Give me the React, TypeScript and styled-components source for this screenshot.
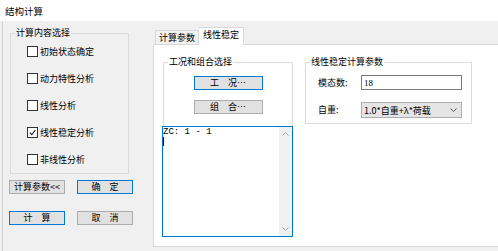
import React from 'react';
import styled, { createGlobalStyle } from 'styled-components';

const GlobalStyle = createGlobalStyle`
  html, body {
    margin: 0;
    padding: 0;
    background: #f0f0f0;
  }
`;

const font = `"Noto Sans CJK SC", "Microsoft YaHei", sans-serif`;

const Window = styled.div`
  width: 498px;
  height: 251px;
  display: flex;
  flex-direction: column;
  background: #f0f0f0;
  font-family: ${font};
  font-size: 9px;
  color: #000;
  overflow: hidden;
`;

const TitleBar = styled.div`
  height: 21px;
  flex: none;
  display: flex;
  align-items: center;
  padding-left: 5px;
  background: #fff;
  font-size: 9.5px;
`;

const Body = styled.div`
  flex: 1;
  display: flex;
  margin-left: 2px;
  border-left: 1px solid #d4d4d4;
  min-height: 0;
`;

const LeftPane = styled.div`
  width: 150px;
  flex: none;
  padding-top: 6px;
  box-sizing: border-box;
`;

const GroupWrap = styled.div`
  padding-left: 7px;
`;

const GroupBox = styled.fieldset<{ $width: number; $open?: boolean }>`
  margin: 0;
  min-width: 0;
  width: ${(p) => p.$width}px;
  box-sizing: border-box;
  border: 1px solid #dcdcdc;
  ${(p) => (p.$open ? 'border-bottom: none;' : '')}
  padding: 0;
`;

const GroupTitle = styled.legend`
  margin-left: 4px;
  padding: 0 1px;
  line-height: 12px;
  font-size: 9px;
`;

const ContentList = styled.div`
  display: flex;
  flex-direction: column;
  gap: 13px;
  padding: 5px 0 7px 16px;
`;

const CheckRow = styled.label`
  display: flex;
  align-items: center;
  gap: 2px;
  height: 14px;
`;

const CheckBox = styled.span`
  width: 9px;
  height: 9px;
  border: 1px solid #333;
  background: #fff;
  display: flex;
  align-items: center;
  justify-content: center;
`;

const ButtonGrid = styled.div`
  display: grid;
  grid-template-columns: 56px 56px;
  column-gap: 12px;
  row-gap: 17px;
  margin: 6px 0 0 6px;
`;

const Button = styled.button<{ $focused?: boolean; $width?: number }>`
  width: ${(p) => (p.$width ? `${p.$width}px` : '100%')};
  height: 14px;
  padding: 0;
  border: 1px solid ${(p) => (p.$focused ? '#0078d7' : '#adadad')};
  background: #e1e1e1;
  font-family: ${font};
  font-size: 9px;
  line-height: 12px;
  color: #000;
  white-space: pre;
  display: flex;
  align-items: center;
  justify-content: center;
`;

const TabControl = styled.div`
  flex: 1;
  display: flex;
  flex-direction: column;
  min-width: 0;
`;

const TabStrip = styled.div`
  height: 23px;
  flex: none;
  display: flex;
  align-items: flex-end;
  padding-left: 2px;
  box-sizing: border-box;
`;

const Tab = styled.div<{ $active?: boolean }>`
  height: ${(p) => (p.$active ? 18 : 14)}px;
  padding: 0 ${(p) => (p.$active ? 4 : 3)}px;
  box-sizing: border-box;
  border: 1px solid #d9d9d9;
  border-bottom: none;
  ${(p) => (p.$active ? 'border-left: none;' : '')}
  background: ${(p) => (p.$active ? '#fff' : '#f0f0f0')};
  margin-bottom: ${(p) => (p.$active ? -1 : 0)}px;
  position: relative;
  z-index: ${(p) => (p.$active ? 1 : 0)};
  display: flex;
  align-items: ${(p) => (p.$active ? 'flex-start' : 'center')};
  padding-top: ${(p) => (p.$active ? 1 : 0)}px;
  line-height: 12px;
`;

const TabPanel = styled.div`
  flex: 1;
  margin-bottom: 4px;
  margin-right: -1px;
  background: #fff;
  border: 1px solid #d9d9d9;
  display: flex;
  align-items: flex-start;
  gap: 12px;
  padding: 11px 0 0 9px;
`;

const CaseColumn = styled.div`
  display: flex;
  flex-direction: column;
  align-items: center;
  padding-top: 8px;
`;

const CaseButtons = styled.div`
  display: flex;
  flex-direction: column;
  gap: 10px;
`;

const Memo = styled.div`
  align-self: stretch;
  margin: 12px -1px 0 -2px;
  height: 111px;
  box-sizing: border-box;
  border: 1px solid #0078d7;
  background: #fff;
  display: flex;
`;

const MemoText = styled.div`
  flex: 1;
  padding: 1px 0 0 0;
  font-family: "Liberation Mono", monospace;
  font-size: 9px;
  line-height: 9px;
  white-space: pre;
`;

const Caret = styled.span`
  display: inline-block;
  width: 1px;
  height: 9px;
  background: #000;
  vertical-align: top;
`;

const ScrollBar = styled.div`
  width: 13px;
  background: #f0f0f0;
  display: flex;
  flex-direction: column;
  justify-content: space-between;
  align-items: center;
  padding: 5px 0;
`;

const ParamList = styled.div`
  display: grid;
  grid-template-columns: 43px 101px;
  row-gap: 12px;
  align-items: center;
  padding: 7px 9px 5px 12px;
`;

const ParamLabel = styled.span`
  line-height: 12px;
`;

const TextField = styled.div`
  height: 15px;
  box-sizing: border-box;
  border: 1px solid #7a7a7a;
  background: #fff;
  padding-left: 2px;
  display: flex;
  align-items: center;
  font-family: "Liberation Serif", serif;
  font-size: 9px;
`;

const SelectBox = styled.div`
  height: 16px;
  box-sizing: border-box;
  border: 1px solid #adadad;
  background: #e5e5e5;
  padding: 0 4px 0 2px;
  display: flex;
  align-items: center;
  justify-content: space-between;
`;

const Chevron: React.FC<{ up?: boolean; color?: string }> = ({ up, color = '#a6a6a6' }) => (
  <svg width="7" height="4" viewBox="0 0 7 4">
    <path
      d={up ? 'M0.5 3.5 L3.5 0.5 L6.5 3.5' : 'M0.5 0.5 L3.5 3.5 L6.5 0.5'}
      fill="none"
      stroke={color}
      strokeWidth="1"
    />
  </svg>
);

const Check: React.FC = () => (
  <svg width="7" height="7" viewBox="0 0 7 7">
    <path d="M0.8 3.6 L2.8 5.6 L6.3 1.2" fill="none" stroke="#222" strokeWidth="1.1" />
  </svg>
);

const analyses = [
  { label: '初始状态确定', checked: false },
  { label: '动力特性分析', checked: false },
  { label: '线性分析', checked: false },
  { label: '线性稳定分析', checked: true },
  { label: '非线性分析', checked: false },
];

const App: React.FC = () => {
  return (
    <>
      <GlobalStyle />
      <Window>
        <TitleBar>结构计算</TitleBar>
        <Body>
          <LeftPane>
            <GroupWrap>
              <GroupBox $width={119}>
                <GroupTitle>计算内容选择</GroupTitle>
                <ContentList>
                  {analyses.map((item) => (
                    <CheckRow key={item.label}>
                      <CheckBox>{item.checked && <Check />}</CheckBox>
                      {item.label}
                    </CheckRow>
                  ))}
                </ContentList>
              </GroupBox>
            </GroupWrap>
            <ButtonGrid>
              <Button>计算参数&lt;&lt;</Button>
              <Button $focused>{'确\u3000定'}</Button>
              <Button $focused>{'计\u3000算'}</Button>
              <Button>{'取\u3000消'}</Button>
            </ButtonGrid>
          </LeftPane>

          <TabControl>
            <TabStrip>
              <Tab>计算参数</Tab>
              <Tab $active>线性稳定</Tab>
            </TabStrip>
            <TabPanel>
              <GroupBox $width={130} $open>
                <GroupTitle>工况和组合选择</GroupTitle>
                <CaseColumn>
                  <CaseButtons>
                    <Button $focused $width={69}>{'工\u3000况…'}</Button>
                    <Button $width={69}>{'组\u3000合…'}</Button>
                  </CaseButtons>
                  <Memo>
                    <MemoText>
                      {'ZC: 1 - 1\n'}
                      <Caret />
                    </MemoText>
                    <ScrollBar>
                      <Chevron up />
                      <Chevron />
                    </ScrollBar>
                  </Memo>
                </CaseColumn>
              </GroupBox>

              <GroupBox $width={167}>
                <GroupTitle>线性稳定计算参数</GroupTitle>
                <ParamList>
                  <ParamLabel>模态数:</ParamLabel>
                  <TextField>18</TextField>
                  <ParamLabel>自重:</ParamLabel>
                  <SelectBox>
                    <span>1.0*自重+λ*荷载</span>
                    <Chevron color="#555" />
                  </SelectBox>
                </ParamList>
              </GroupBox>
            </TabPanel>
          </TabControl>
        </Body>
      </Window>
    </>
  );
};

export default App;
